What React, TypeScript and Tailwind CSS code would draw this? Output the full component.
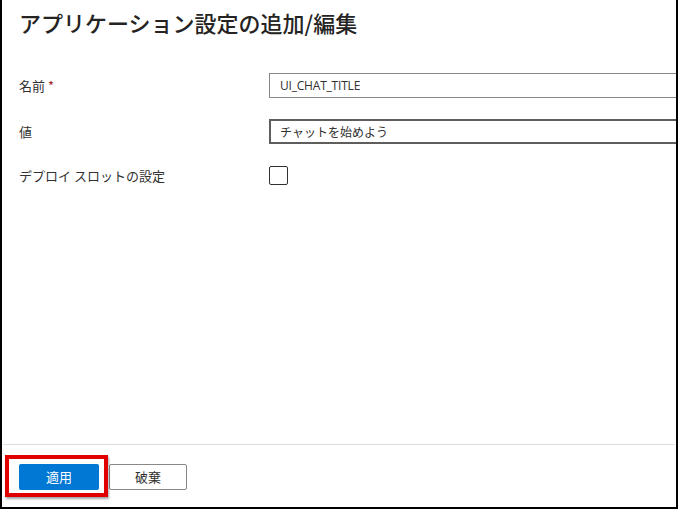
export default function App() {
    return (
        <div
            className="flex h-[509px] w-[678px] flex-col border-x-2 border-b-2 border-black bg-white text-[#323130] font-['Noto_Sans_CJK_JP',sans-serif]"
        >
            {/* TITLE */}
            <h1 className="pl-[17px] pt-[6px] text-[22px] font-medium leading-[32px] text-[#252423]">
                アプリケーション設定の追加/編集
            </h1>

            {/* FORM */}
            <div className="mt-[35px] flex flex-col text-[13px]">
                <div className="flex h-[25px] items-center">
                    <label className="w-[267px] pl-[17px]">
                        名前 <span className="text-[#a4262c]">*</span>
                    </label>
                    <div className="flex h-[25px] flex-1 items-center border border-r-0 border-[#8a8886] pl-[10px] text-[12px] font-['Open_Sans',sans-serif] tracking-[-0.2px]">
                        UI_CHAT_TITLE
                    </div>
                </div>

                <div className="mt-[21px] flex h-[25px] items-center">
                    <label className="w-[267px] pl-[17px]">値</label>
                    <div className="flex h-[25px] flex-1 items-center border-2 border-r-0 border-[#605e5c] pl-[9px] text-[12px]">
                        チャットを始めよう
                    </div>
                </div>

                <div className="mt-[22px] flex h-[19px] items-center">
                    <label className="w-[267px] pl-[17px]">デプロイ スロットの設定</label>
                    <div className="h-[19px] w-[19px] rounded-[2px] border border-[#323130]" />
                </div>
            </div>

            <div className="flex-1" />

            {/* FOOTER */}
            <div className="relative mx-[1px] h-[63px] border-t border-[#dcdcdc]">
                <div className="flex gap-[10px] pl-[16px] pt-[19px] text-[13px]">
                    <button className="h-[26px] w-[80px] rounded-[2px] bg-[#0078d4] text-white">
                        適用
                    </button>
                    <button className="h-[26px] w-[78px] rounded-[2px] border border-[#8a8886] bg-white">
                        破棄
                    </button>
                </div>
                <div className="absolute left-[2px] top-[10px] h-[42px] w-[103px] border-4 border-[#e00000] shadow-[1px_2px_2px_rgba(0,0,0,0.35)]" />
            </div>
        </div>
    );
}
